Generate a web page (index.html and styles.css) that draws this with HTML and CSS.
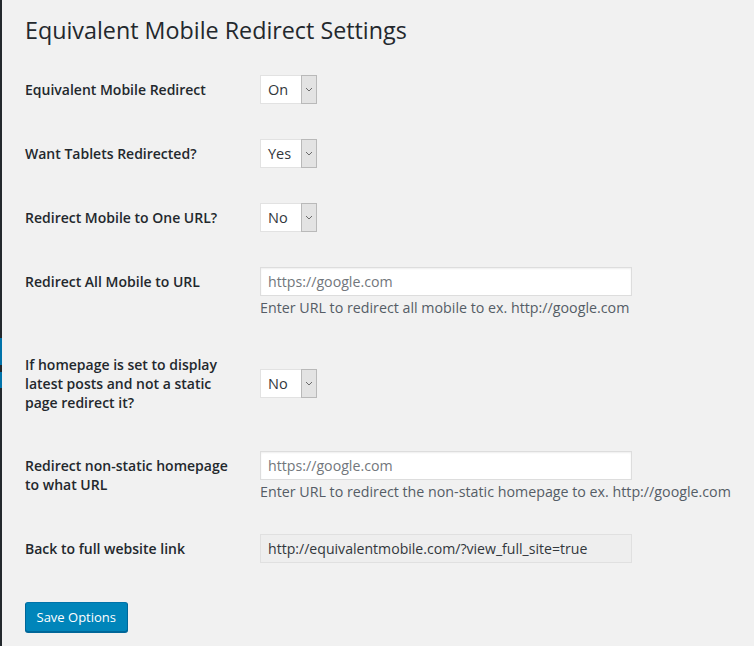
FILE: index.html
```html
<!DOCTYPE html>
<html>
<head>
<meta charset="utf-8">
<link rel="stylesheet" href="styles.css">
</head>
<body>
<div class="menu-edge">
  <span class="edge-mark mark-a"></span>
  <span class="edge-mark mark-b"></span>
</div>
<div class="wrap">
  <h1 class="page-title">Equivalent Mobile Redirect Settings</h1>
  <form class="settings">
    <div class="form-table">
      <div class="row row-select">
        <div class="th">Equivalent Mobile Redirect</div>
        <div class="td">
          <span class="select"><span class="select-value">On</span><span class="select-arrow"><svg width="8" height="5" viewBox="0 0 8 5"><polyline points="1,1 4,4 7,1" fill="none" stroke="#6b6b6b" stroke-width="1"/></svg></span></span>
        </div>
      </div>
      <div class="row row-select">
        <div class="th">Want Tablets Redirected?</div>
        <div class="td">
          <span class="select"><span class="select-value">Yes</span><span class="select-arrow"><svg width="8" height="5" viewBox="0 0 8 5"><polyline points="1,1 4,4 7,1" fill="none" stroke="#6b6b6b" stroke-width="1"/></svg></span></span>
        </div>
      </div>
      <div class="row row-select">
        <div class="th">Redirect Mobile to One URL?</div>
        <div class="td">
          <span class="select"><span class="select-value">No</span><span class="select-arrow"><svg width="8" height="5" viewBox="0 0 8 5"><polyline points="1,1 4,4 7,1" fill="none" stroke="#6b6b6b" stroke-width="1"/></svg></span></span>
        </div>
      </div>
      <div class="row row-input">
        <div class="th">Redirect All Mobile to URL</div>
        <div class="td">
          <input class="text-input" type="text" placeholder="https://google.com">
          <p class="description">Enter URL to redirect all mobile to ex. http://google.com</p>
        </div>
      </div>
      <div class="row row-select row-tall">
        <div class="th">If homepage is set to display latest posts and not a static page redirect it?</div>
        <div class="td">
          <span class="select"><span class="select-value">No</span><span class="select-arrow"><svg width="8" height="5" viewBox="0 0 8 5"><polyline points="1,1 4,4 7,1" fill="none" stroke="#6b6b6b" stroke-width="1"/></svg></span></span>
        </div>
      </div>
      <div class="row row-input">
        <div class="th">Redirect non-static homepage to what URL</div>
        <div class="td">
          <input class="text-input" type="text" placeholder="https://google.com">
          <p class="description">Enter URL to redirect the non-static homepage to ex. http://google.com</p>
        </div>
      </div>
      <div class="row row-readonly">
        <div class="th">Back to full website link</div>
        <div class="td">
          <input class="text-input readonly" type="text" value="http://equivalentmobile.com/?view_full_site=true" readonly>
        </div>
      </div>
    </div>
    <p class="submit"><button type="button" class="button-primary">Save Options</button></p>
  </form>
</div>
</body>
</html>
```
FILE: styles.css
```css
html, body {
  margin: 0;
  padding: 0;
}
body {
  background: #f1f1f1;
  font-family: "Open Sans", "Noto Sans", sans-serif;
  color: #23282d;
  display: flex;
  min-height: 646px;
}
.menu-edge {
  width: 2px;
  flex: 0 0 2px;
  background: #23282d;
  position: relative;
}
.edge-mark {
  position: absolute;
  left: 0;
  width: 2px;
  background: #0073aa;
}
.mark-a { top: 338px; height: 27px; }
.mark-b { top: 372px; height: 16px; }
.wrap {
  flex: 1;
  padding-left: 23px;
}
.page-title {
  font-size: 23.3px;
  font-weight: 400;
  line-height: 30px;
  margin: 15px 0 15px;
  color: #23282d;
}
.settings {
  margin: 0;
}
.form-table {
  display: flex;
  flex-direction: column;
}
.row {
  display: grid;
  grid-template-columns: 225px 1fr;
}
.th {
  font-size: 14px;
  font-weight: 600;
  line-height: 19px;
  padding: 20px 10px 20px 0;
  color: #23282d;
  align-self: start;
}
.td {
  padding: 15px 10px 20px;
  font-size: 14px;
  line-height: 19px;
  align-self: center;
}
.row-input .td { padding-bottom: 18px; }
.row-tall .th { padding-bottom: 24px; }
.row-readonly .td { padding-bottom: 20px; }
.select {
  display: flex;
  width: 57px;
  height: 29px;
  box-sizing: border-box;
  background: #fff;
  border: 1px solid #e2e2e2;
}
.select-value {
  flex: 1;
  padding-left: 7px;
  font-size: 14.5px;
  line-height: 27px;
  color: #32373c;
}
.select-arrow {
  width: 16px;
  box-sizing: border-box;
  background: #e3e3e3;
  border: 1px solid #b9b9b9;
  margin: -1px -1px -1px 0;
  display: flex;
  align-items: center;
  justify-content: center;
}
.text-input {
  display: block;
  width: 372px;
  height: 29px;
  box-sizing: border-box;
  margin: 0;
  padding: 0 7px;
  border: 1px solid #ddd;
  box-shadow: inset 0 1px 2px rgba(0,0,0,.07);
  background: #fff;
  font-family: "Open Sans", "Noto Sans", sans-serif;
  font-size: 14.2px;
  color: #32373c;
  outline: none;
}
.text-input::placeholder {
  color: #72777c;
}
.text-input.readonly {
  background: #eee;
  border-color: #e0e0e0;
  box-shadow: none;
  color: #32373c;
  font-size: 14.1px;
}
.description {
  margin: 2px 0 0;
  font-size: 14.25px;
  line-height: 19px;
  color: #555d66;
}
.submit {
  margin: 19px 0 0;
  padding: 0;
}
.button-primary {
  font-family: "Open Sans", "Noto Sans", sans-serif;
  font-size: 13px;
  line-height: 28px;
  height: 30px;
  padding: 0 10.5px;
  background: #0085ba;
  color: #fff;
  border: 1px solid #0073aa;
  border-color: #0073aa #006799 #006799;
  border-radius: 3px;
  box-shadow: 0 1px 0 #006799;
  cursor: pointer;
}
```
